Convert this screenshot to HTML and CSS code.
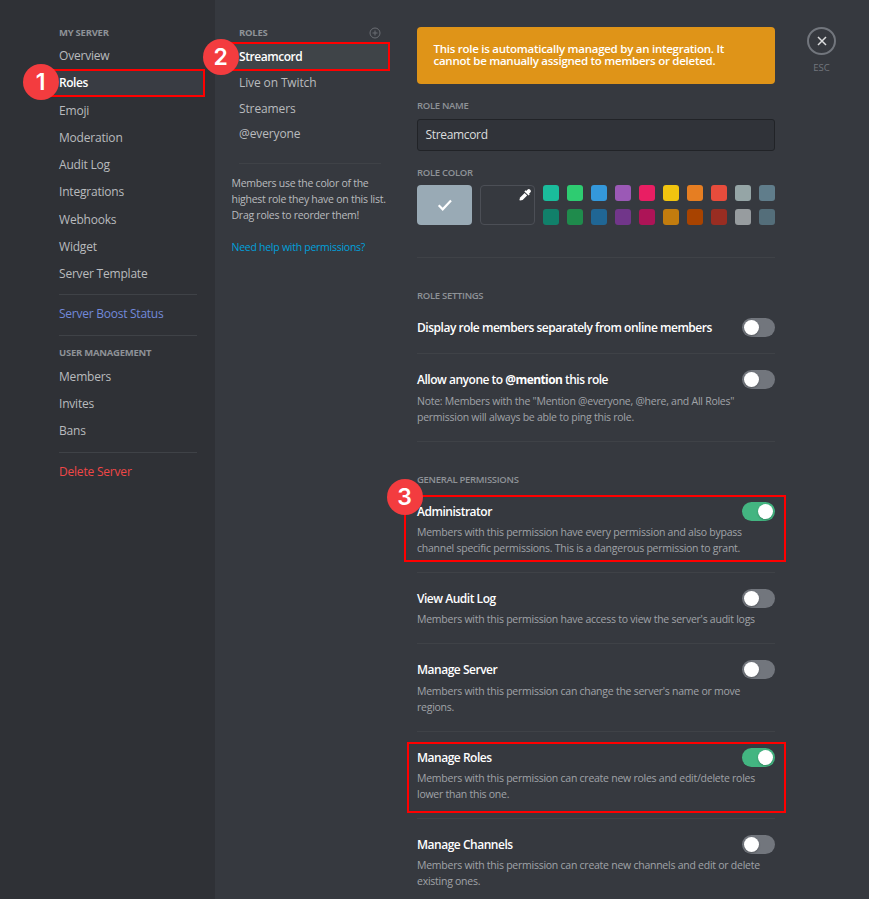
FILE: index.html
```html
<!DOCTYPE html>
<html lang="en">
<head>
<meta charset="utf-8">
<title>Server Settings</title>
<link rel="stylesheet" href="styles.css">
</head>
<body>
<div class="app">
  <nav class="sidebar">
    <h2 class="eyebrow">My Server</h2>
    <ul class="nav">
      <li>Overview</li>
      <li class="nav-selected"><span class="step">1</span><b class="nav-label">Roles</b></li>
      <li>Emoji</li>
      <li>Moderation</li>
      <li>Audit Log</li>
      <li>Integrations</li>
      <li>Webhooks</li>
      <li>Widget</li>
      <li>Server Template</li>
    </ul>
    <hr class="rule">
    <ul class="nav nav-single"><li class="boost">Server Boost Status</li></ul>
    <hr class="rule">
    <h2 class="eyebrow eyebrow-users">User Management</h2>
    <ul class="nav nav-users">
      <li>Members</li>
      <li>Invites</li>
      <li>Bans</li>
    </ul>
    <hr class="rule">
    <ul class="nav nav-single"><li class="danger">Delete Server</li></ul>
  </nav>

  <section class="roles">
    <div class="roles-head">
      <h2 class="eyebrow">Roles</h2>
      <svg class="add" viewBox="0 0 12 12"><circle cx="6" cy="6" r="5"/><path d="M6 3.5v5M3.5 6h5"/></svg>
    </div>
    <ul class="role-list">
      <li class="role-selected"><span class="step">2</span><b class="nav-label">Streamcord</b></li>
      <li>Live on Twitch</li>
      <li>Streamers</li>
      <li>@everyone</li>
    </ul>
    <hr class="rule">
    <p class="hint">Members use the color of the<br>highest role they have on this list.<br>Drag roles to reorder them!</p>
    <a class="help">Need help with permissions?</a>
  </section>

  <main class="content">
    <div class="banner">This role is automatically managed by an integration. It<br>cannot be manually assigned to members or deleted.</div>
    <h3 class="label label-name">Role name</h3>
    <div class="input">Streamcord</div>
    <h3 class="label label-color">Role color</h3>
    <div class="colors">
      <div class="color-default"><svg viewBox="0 0 16 14"><path d="M1.7 7.3l4 4L14 2.5"/></svg></div>
      <div class="color-custom"><svg viewBox="0 0 12 12"><path d="M7.2 1.9 8.4.8a1.9 1.9 0 0 1 2.8 2.8L10.1 4.8l.6.7-1.1 1.1L5.4 2.4l1.1-1.1z"/><path d="M5.6 3.9 8.1 6.4 3.6 10.9 1 11.6.4 11 1.1 8.4z"/></svg></div>
      <div class="swatches">
        <i class="c1"></i><i class="c2"></i><i class="c3"></i><i class="c4"></i><i class="c5"></i><i class="c6"></i><i class="c7"></i><i class="c8"></i><i class="c9"></i><i class="c10"></i>
        <i class="d1"></i><i class="d2"></i><i class="d3"></i><i class="d4"></i><i class="d5"></i><i class="d6"></i><i class="d7"></i><i class="d8"></i><i class="d9"></i><i class="d10"></i>
      </div>
    </div>
    <hr class="rule">
    <h3 class="label label-settings">Role settings</h3>
    <div class="setting first">
      <div class="row"><h4>Display role members separately from online members</h4><span class="toggle"></span></div>
    </div>
    <div class="setting roomy">
      <div class="row"><h4>Allow anyone to <b>@mention</b> this role</h4><span class="toggle"></span></div>
      <p>Note: Members with the "Mention @everyone, @here, and All Roles"<br>permission will always be able to ping this role.</p>
    </div>
    <h3 class="label label-general">General permissions</h3>
    <div class="setting first">
      <span class="frame frame-admin"><span class="step">3</span></span>
      <div class="row"><h4>Administrator</h4><span class="toggle on"></span></div>
      <p>Members with this permission have every permission and also bypass<br>channel specific permissions. This is a dangerous permission to grant.</p>
    </div>
    <div class="setting">
      <div class="row"><h4>View Audit Log</h4><span class="toggle"></span></div>
      <p>Members with this permission have access to view the server's audit logs</p>
    </div>
    <div class="setting roomy">
      <div class="row"><h4>Manage Server</h4><span class="toggle"></span></div>
      <p>Members with this permission can change the server's name or move<br>regions.</p>
    </div>
    <div class="setting">
      <span class="frame frame-roles"></span>
      <div class="row"><h4>Manage Roles</h4><span class="toggle on"></span></div>
      <p>Members with this permission can create new roles and edit/delete roles<br>lower than this one.</p>
    </div>
    <div class="setting">
      <div class="row"><h4>Manage Channels</h4><span class="toggle"></span></div>
      <p>Members with this permission can create new channels and edit or delete<br>existing ones.</p>
    </div>
  </main>

  <aside class="close">
    <div class="close-ring"><svg viewBox="0 0 10 10"><path d="M1 1l8 8M9 1l-8 8"/></svg></div>
    <span>ESC</span>
  </aside>
</div>
</body>
</html>
```

FILE: styles.css
```css
* { box-sizing: border-box; }
body, h2, h3, h4, p, ul { margin: 0; padding: 0; }
ul { list-style: none; }

body {
  background: #36393f;
  color: #b9bbbe;
  font-family: "Open Sans", "Noto Sans", sans-serif;
  font-size: 12px;
  white-space: nowrap;
}

.app {
  display: flex;
  height: 899px;
  overflow: hidden;
}

.rule {
  height: 1px;
  margin: 0;
  border: 0;
  background: #3f4247;
}

.eyebrow {
  height: 16px;
  font-size: 9.5px;
  line-height: 17px;
  font-weight: 700;
  letter-spacing: -0.25px;
  text-transform: uppercase;
  color: #8e9297;
}

.sidebar {
  width: 215px;
  flex: none;
  padding: 24px 18px 0 59px;
  background: #2f3136;
}

.nav { padding: 2.4px 0 7px; }
.nav li {
  position: relative;
  height: 27.2px;
  line-height: 27px;
  letter-spacing: -0.2px;
}
.nav-single { padding: 5px 0 8px; }
.nav-users { padding: 3px 0 8px; }
.nav-users li { height: 27px; }
.eyebrow-users { margin-top: 8px; }
.nav .boost { color: #7289da; letter-spacing: -0.25px; }
.danger { color: #f04747; }

.nav .nav-selected, .role-list .role-selected {
  display: flex;
  align-items: center;
  border: 2px solid #f00;
  color: #fff;
}
.nav .nav-selected {
  height: 28px;
  margin: -0.6px -8px -0.2px -12px;
  padding-left: 10px;
  background: #393c43;
}
.nav-label { font-weight: 600; letter-spacing: -0.45px; }

.step {
  position: absolute;
  width: 36px;
  height: 36px;
  border-radius: 50%;
  background: #f33c3f;
  color: #fff;
  font: 600 23px/36px Inter, "Liberation Sans", sans-serif;
  letter-spacing: 0;
  text-align: center;
}
.nav-selected .step { left: -26.3px; top: -7px; }

.roles {
  width: 202px;
  flex: none;
  padding: 24px 36px 0 24px;
}
.roles-head {
  display: flex;
  justify-content: space-between;
  align-items: center;
}
.add {
  width: 12px;
  height: 12px;
  margin: 2px 0.5px 0 0;
  fill: none;
  stroke: #6b6e74;
}
.role-list { padding: 2px 0 16px; }
.role-list li {
  position: relative;
  height: 25.6px;
  line-height: 25px;
  letter-spacing: -0.12px;
}
.role-list .role-selected {
  height: 29px;
  margin: 0 -9px -1px -12px;
  padding-left: 10px;
  background: #3f4448;
}
.role-selected .step { left: -26.3px; top: -5px; }
.hint {
  margin: 11.5px 0 0 -7.5px;
  font-size: 10.5px;
  line-height: 16px;
  letter-spacing: -0.26px;
}
.help {
  display: block;
  margin: 16px 0 0 -7.5px;
  font-size: 10.5px;
  line-height: 16px;
  letter-spacing: -0.26px;
  color: #00a0dc;
}

.content {
  width: 358px;
  flex: none;
  padding-top: 27px;
}
.banner {
  height: 57px;
  padding: 16px 16.5px;
  border-radius: 4px;
  background: #df9418;
  color: #fff;
  font-size: 11.5px;
  font-weight: 600;
  line-height: 12px;
  letter-spacing: -0.26px;
}
.label {
  height: 16px;
  font-size: 9.5px;
  font-weight: 600;
  line-height: 17px;
  letter-spacing: -0.3px;
  text-transform: uppercase;
  color: #8e9297;
}
.label-name { margin: 13px 0 6px; }
.label-color { margin: 13px 0 5px; }
.label-settings { margin: 29px 0 15px; }
.label-general { margin: 29px 0 15px; }
.input {
  height: 32px;
  padding-left: 7.5px;
  border: 1px solid #212327;
  border-radius: 3px;
  background: #303339;
  color: #dcddde;
  line-height: 30px;
  letter-spacing: -0.33px;
}
.colors {
  display: flex;
  gap: 8px;
  height: 40px;
  margin-bottom: 32px;
}
.color-default, .color-custom {
  display: flex;
  width: 55px;
  border-radius: 4px;
}
.color-default {
  align-items: center;
  justify-content: center;
  background: #99aab5;
}
.color-default svg {
  width: 16px;
  height: 14px;
  fill: none;
  stroke: #fff;
  stroke-width: 2.2;
}
.color-custom {
  justify-content: flex-end;
  padding: 3px 3px 0 0;
  border: 1px solid #4c4f56;
}
.color-custom svg { width: 12px; height: 12px; fill: #fff; }
.swatches {
  display: grid;
  grid-template-columns: repeat(10, 16px);
  grid-auto-rows: 16px;
  gap: 8px;
}
.swatches i { border-radius: 3px; }
.c1 { background: #1abc9c; } .c2 { background: #2ecc71; }
.c3 { background: #3498db; } .c4 { background: #9b59b6; }
.c5 { background: #e91e63; } .c6 { background: #f1c40f; }
.c7 { background: #e67e22; } .c8 { background: #e74c3c; }
.c9 { background: #95a5a6; } .c10 { background: #607d8b; }
.d1 { background: #11806a; } .d2 { background: #1f8b4c; }
.d3 { background: #206694; } .d4 { background: #71368a; }
.d5 { background: #ad1457; } .d6 { background: #c27c0e; }
.d7 { background: #a84300; } .d8 { background: #992d22; }
.d9 { background: #979c9f; } .d10 { background: #546e7a; }

.setting {
  position: relative;
  padding: 16px 0;
  border-bottom: 1px solid #3f4247;
}
.setting.first { padding-top: 0; }
.row {
  display: flex;
  justify-content: space-between;
  height: 19px;
}
.row h4 {
  font-size: 12px;
  font-weight: 600;
  line-height: 19px;
  letter-spacing: -0.48px;
  color: #fff;
}
.row b { font-weight: 700; letter-spacing: -0.6px; }
.setting p {
  margin-top: 3px;
  font-size: 10.5px;
  line-height: 16px;
  letter-spacing: -0.25px;
  color: #a0a3a8;
}
.setting.roomy p { margin-top: 4px; }
.toggle {
  width: 33px;
  height: 19px;
  border-radius: 10px;
  background: #72767d;
}
.toggle::before {
  content: "";
  display: block;
  width: 15px;
  height: 15px;
  margin: 2px;
  border-radius: 50%;
  background: #fff;
  box-shadow: 0 1px 2px rgba(0, 0, 0, 0.25);
}
.toggle.on { background: #43b581; }
.toggle.on::before { margin-left: 16px; }

.frame {
  position: absolute;
  right: -11px;
  border: 2px solid #f00;
}
.frame-admin { left: -13px; top: -7px; height: 67px; }
.frame-roles { left: -10px; top: 10px; height: 71px; }
.frame-admin .step { left: -19.5px; top: -18px; }

.close {
  display: flex;
  flex-direction: column;
  align-items: center;
  width: 29px;
  margin: 27px 0 0 32px;
  color: #72767d;
  font-size: 9.5px;
}
.close-ring {
  display: flex;
  align-items: center;
  justify-content: center;
  width: 29px;
  height: 28px;
  border: 2px solid #72767d;
  border-radius: 50%;
}
.close-ring svg { width: 10px; height: 10px; fill: none; stroke: #dcddde; stroke-width: 1.5; }
.close span { margin-top: 6px; }
```
